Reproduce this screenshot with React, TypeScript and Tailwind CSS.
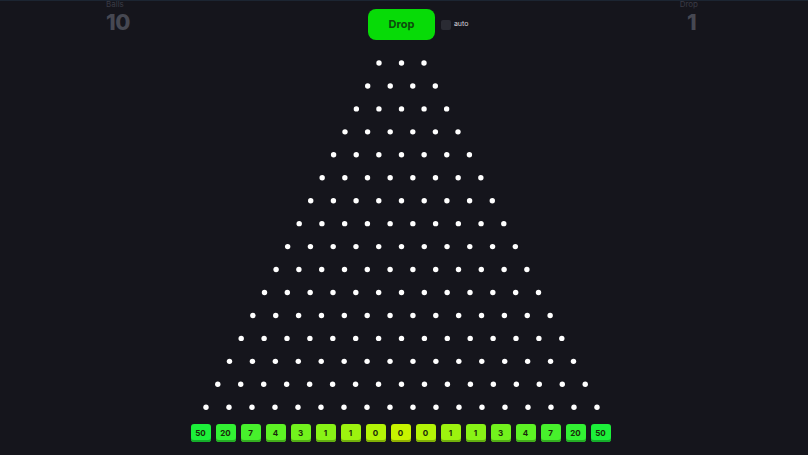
import React from 'react'

const multipliers = [50, 20, 7, 4, 3, 1, 1, 0, 0, 0, 1, 1, 3, 4, 7, 20, 50]

// edge colour -> centre colour
const edge = [28, 240, 58]
const centre = [200, 244, 0]

function bucketColour(i: number) {
  const t = 1 - Math.abs(i - 8) / 8
  const c = edge.map((v, k) => Math.round(v + (centre[k] - v) * t))
  const d = c.map((v) => Math.round(v * 0.72))
  return { bg: `rgb(${c.join(',')})`, shade: `rgb(${d.join(',')})` }
}

function Board() {
  const rows = 16
  const pins: { x: number; y: number }[] = []
  for (let r = 0; r < rows; r++) {
    const count = r + 3
    const gap = 22.5 + (0.5 * r) / (rows - 1)
    const y = 8 + r * 22.95
    for (let j = 0; j < count; j++) {
      pins.push({ x: 210.5 + (j - (count - 1) / 2) * gap, y })
    }
  }
  return (
    <svg width="421" height="369" viewBox="0 0 421 369" className="block">
      {pins.map((p, i) => (
        <circle key={i} cx={p.x} cy={p.y} r="2.7" fill="#ffffff" />
      ))}
    </svg>
  )
}

export default function App() {
  return (
    <div
      className="relative w-[808px] h-[455px] overflow-hidden bg-[#15151c] border-t border-[#1c2532]"
      style={{ fontFamily: 'Inter, "Noto Sans", sans-serif' }}
    >
      {/* Header */}
      <div className="flex items-start justify-between h-[39px] pl-[106px] pr-[110px]">
        <div className="flex flex-col -mt-[1px]">
          <span className="text-[8px] leading-[9px] text-[#3a3b45]">Balls</span>
          <span className="text-[22px] leading-[26px] font-extrabold text-[#464852] tracking-[-0.5px]">10</span>
        </div>
        <div className="flex items-center gap-[6px] mt-[8px] ml-[238px]">
          <button className="w-[67px] h-[31px] rounded-[8px] bg-[#07db07] text-[#0d4a0d] text-[11px] font-bold">
            Drop
          </button>
          <div className="flex items-center gap-[3px]">
            <span className="w-[10px] h-[10px] rounded-[2px] bg-[#2a2b33]" />
            <span className="text-[7px] text-[#d5d6dc]">auto</span>
          </div>
        </div>
        <div className="flex flex-col items-center -mt-[1px] ml-auto">
          <span className="text-[8px] leading-[9px] text-[#3a3b45]">Drop</span>
          <span className="text-[22px] leading-[26px] font-extrabold text-[#464852] pl-[6px]">1</span>
        </div>
      </div>

      {/* Pegs */}
      <div className="flex justify-center mt-[15px] pr-[5px]">
        <Board />
      </div>

      {/* Buckets */}
      <div className="flex justify-center gap-[5px] pr-[7px]">
        {multipliers.map((m, i) => {
          const c = bucketColour(i)
          return (
            <div
              key={i}
              className="w-[20px] h-[18px] rounded-[3px] flex items-center justify-center text-[8px] font-bold text-[#1a2a0a]"
              style={{ backgroundColor: c.bg, boxShadow: `inset 0 -2px 0 ${c.shade}` }}
            >
              {m}
            </div>
          )
        })}
      </div>
    </div>
  )
}
